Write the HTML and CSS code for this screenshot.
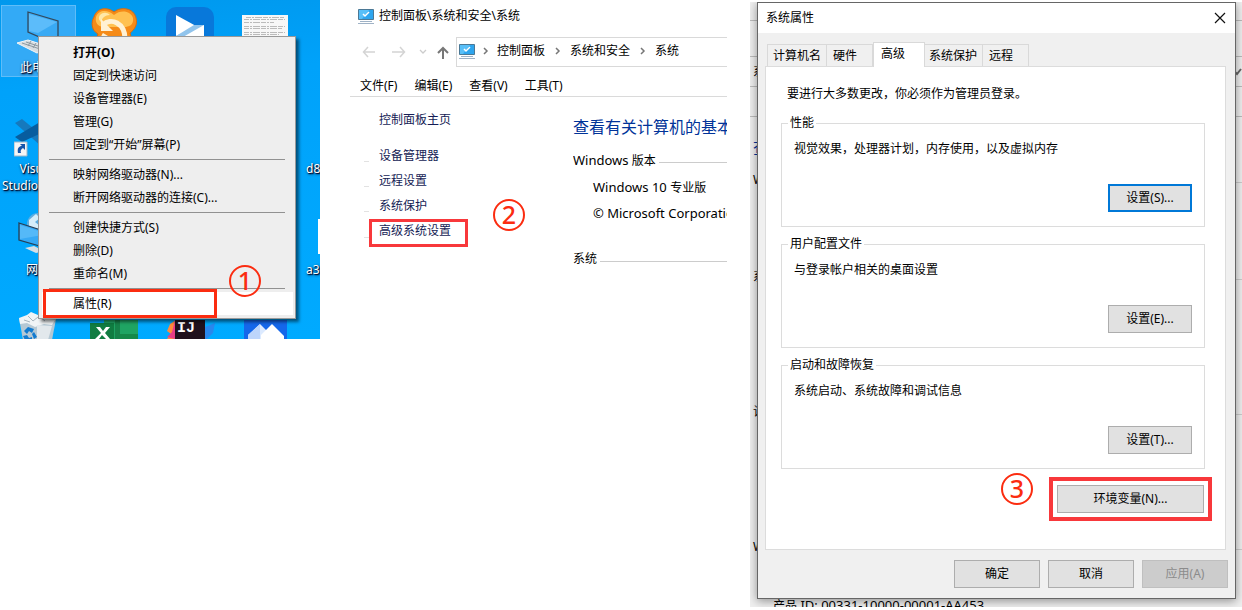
FILE: index.html
```html
<!DOCTYPE html>
<html lang="zh-CN">
<head>
<meta charset="utf-8">
<title>系统属性</title>
<link rel="stylesheet" href="styles.css">
</head>
<body>
<main class="steps">
  <section class="step step-desktop">
    <div class="desktop">
      <div class="selection"></div>
      <svg class="icon icon-pc" width="48" height="48" viewBox="0 0 48 48">
        <path d="M12 2 42 11v24L12 22z" fill="#39aaf4" stroke="#34495c" stroke-width="1.3"/>
        <path d="M13 4 41 12 22 23 13 21z" fill="#5cbcfa"/>
        <path d="M1 33 12 30 34 37 21 43z" fill="#d8dde0" stroke="#f6f6f6"/>
        <path d="M6 33 24 39M10 32 28 38M15 31 12 36M20 33 17 38" stroke="#8e9aa2" fill="none"/>
      </svg>
      <span class="label label-pc">此电脑</span>
      <svg class="icon icon-vscode" width="36" height="42" viewBox="0 0 36 42">
        <path d="M1 7 8 3 36 26v12z" fill="#1679bd"/>
        <path d="M1 21 36 0v13L8 26z" fill="#075d9f"/>
        <path d="M0 26h13v14H0z" fill="#f5f5f5" stroke="#99b5ca"/>
        <path d="M4 37c-1-5 1-7 4-7l-2-2h5v6l-2-2c-2 1-3 3-2 5z" fill="#1655aa"/>
      </svg>
      <span class="label label-vscode">Visual<br>Studio Code</span>
      <svg class="icon icon-network" width="36" height="42" viewBox="0 0 36 42">
        <circle cx="20" cy="12" r="11" fill="#5daee1"/>
        <path d="M11 8l7-6 4 4-5 4 5 4-3 6-8-5zM24 2l7 5-2 7-5-3z" fill="#d5edf9"/>
        <path d="M1 11 32 21v16L1 28z" fill="#36a9f5" stroke="#273f55" stroke-width="1.3"/>
        <path d="M2 13 30 22 2 27z" fill="#55b9f8"/>
        <path d="M7 36 16 34 26 39 18 41z" fill="#d7dfe4"/>
      </svg>
      <span class="label label-network">网络</span>
      <svg class="icon icon-orange" width="48" height="46" viewBox="0 0 48 46">
        <path d="M4 9C7-1 18-1 24 4 31-2 44 0 46 10c2 7-2 12-6 15 4 12 0 20-16 20S4 39 8 26C1 22 1 14 4 9z" fill="#f58b18" stroke="#db6c0c"/>
        <path d="M6 9C9 1 18 2 24 7c7-6 17-4 19 3 1 7-4 9-9 9H13C7 18 5 14 6 9z" fill="#ffc151"/>
        <path d="M10 7c3-3 7-3 10 0-5 0-8 3-9 7-2-2-3-4-1-7z" fill="#ffe8a8"/>
        <path d="M13 17c8-8 22-2 22 14" fill="none" stroke="#fff1d4" stroke-width="5"/>
        <path d="M11 11v12h12z" fill="#fff1d4"/>
        <path d="M11 30c0-2 1-4 2-5l5 3-1 3z" fill="#fff1d4"/>
      </svg>
      <svg class="icon icon-video" width="48" height="46" viewBox="0 0 48 46">
        <rect width="48" height="46" rx="10" fill="#0878da"/>
        <path d="M10 8 30 19 10 29z" fill="#fff"/>
        <path d="M10 29 28 18h10v20H10z" fill="#fff"/>
        <path d="M10 29 28 18h10L17 30H10z" fill="#91c4ec"/>
      </svg>
      <svg class="icon icon-paper" width="46" height="30" viewBox="0 0 46 30">
        <path d="M0 0h46v30H0z" fill="#f7f7f7"/>
        <path d="M4 2.500h38M2 4.500h41M2 7.500h30M2 11.500h41M2 13.500h38M2 17.500h41M2 19.500h35" stroke="#bbb" stroke-dasharray="5 1 2 1 7 1"/>
      </svg>
      <svg class="icon icon-bin" width="40" height="28" viewBox="0 0 40 28">
        <path d="M1 6 5 28h29l4-21z" fill="#b5c8d4"/>
        <path d="M1 6 9 3l4-3 7 3 7-1 4 5 6 1-3 5-8-1-9 3-8-4-7 1z" fill="#f0f4f6"/>
        <path d="M10 4l5 5 5-4M22 5l5 4M6 8l6 2" stroke="#a7b5be" fill="none"/>
        <path d="M19 13v15h11l4-14z" fill="#e2e8ec"/>
        <path d="M6 19l4-4 6 2-2 4-3-2-2 3zM5 24l4-1 2 3 3-1v3H7zM16 20l3 5-3 2-2-5z" fill="#117bd0"/>
      </svg>
      <svg class="icon icon-excel" width="48" height="19" viewBox="0 0 48 19">
        <path d="M14 0h34v19H14z" fill="#1fa463"/>
        <path d="M25 0h5v19h-5z" fill="#168249"/><path d="M30 14h18v5H30z" fill="#158949"/>
        <path d="M0 3h24v16H0z" fill="#107c41"/>
        <path d="M6 7h4l3 4 3-4h4l-5 6 5 6h-4l-4-4-3 4H5l6-6z" fill="#fff"/>
      </svg>
      <div class="icon icon-idea">
        <svg width="48" height="19" viewBox="0 0 48 19">
          <path d="M3 4 9 0v19H0l4-5-4-3z" fill="#ff8b3c"/><path d="M8 0v19l-8-2 5-5z" fill="#e83d87"/>
          <path d="M38 7 48 3l-2 10-6 6h-5z" fill="#2987ed"/>
          <path d="M8 0h30v19H8z" fill="#20111d"/>
        </svg>
        <span class="idea-text">IJ</span>
      </div>
      <svg class="icon icon-peaks" width="44" height="19" viewBox="0 0 44 19">
        <path d="M0 0h43v19H0z" fill="#1567ea"/>
        <path d="M4 19v-4L16 4l9 9v6z" fill="#dceaff"/><path d="M16 4v15H4v-4z" fill="#bdd5fb"/>
        <path d="M17 15 28 4l12 12v3H17z" fill="#fff"/>
      </svg>
      <span class="label label-d">d8</span>
      <span class="file-edge"></span>
      <span class="label label-a">a3</span>

      <div class="context-menu" role="menu">
        <button class="menu-item menu-default" role="menuitem">打开(O)</button>
        <button class="menu-item" role="menuitem">固定到快速访问</button>
        <button class="menu-item" role="menuitem">设备管理器(E)</button>
        <button class="menu-item" role="menuitem">管理(G)</button>
        <button class="menu-item" role="menuitem">固定到“开始”屏幕(P)</button>
        <hr class="menu-rule">
        <button class="menu-item" role="menuitem">映射网络驱动器(N)...</button>
        <button class="menu-item" role="menuitem">断开网络驱动器的连接(C)...</button>
        <hr class="menu-rule">
        <button class="menu-item" role="menuitem">创建快捷方式(S)</button>
        <button class="menu-item" role="menuitem">删除(D)</button>
        <button class="menu-item" role="menuitem">重命名(M)</button>
        <hr class="menu-rule">
        <button class="menu-item menu-current" role="menuitem">属性(R)</button>
        <span class="menu-mark"></span>
      </div>
      <span class="number number-one">1</span>
    </div>
  </section>

  <section class="step step-panel">
    <header class="panel-title">
      <svg width="16" height="16" viewBox="0 0 16 16"><path d="M.5 1.500h15v10H.5z" fill="#2ea5ee" stroke="#4b7895"/><path d="M1 2h10L4 11H1z" fill="#58bff8"/><path d="m5 6 2 2 4-4" fill="none" stroke="#fff" stroke-width="1.500"/><path d="M2 13.500h12M0 15.500h16" stroke="#9fb2c6"/></svg>
      <span>控制面板\系统和安全\系统</span>
    </header>
    <div class="nav-row">
      <div class="nav-buttons">
        <button class="nav-button" aria-label="后退"><svg width="14" height="12" viewBox="0 0 14 12"><path d="M13 6H2M6 1 1.500 6 6 11" fill="none" stroke="#d4d4d4" stroke-width="1.500"/></svg></button>
        <button class="nav-button nav-forward" aria-label="前进"><svg width="14" height="12" viewBox="0 0 14 12"><path d="M0 6h12M8 1l4.500 5L8 11" fill="none" stroke="#d4d4d4" stroke-width="1.500"/></svg></button>
        <button class="nav-button nav-recent" aria-label="最近位置"><svg width="8" height="6" viewBox="0 0 8 6"><path d="m1 1 3 3 3-3" fill="none" stroke="#ccc" stroke-width="1.300"/></svg></button>
        <button class="nav-button" aria-label="向上"><svg width="12" height="13" viewBox="0 0 12 13"><path d="M6 13V2M1 7l5-5 5 5" fill="none" stroke="#777" stroke-width="2"/></svg></button>
      </div>
      <div class="address">
        <svg width="16" height="16" viewBox="0 0 16 16"><path d="M.5 1.500h15v10H.5z" fill="#2ea5ee" stroke="#4b7895"/><path d="M1 2h10L4 11H1z" fill="#58bff8"/><path d="m5 6 2 2 4-4" fill="none" stroke="#fff" stroke-width="1.500"/><path d="M2 13.500h12M0 15.500h16" stroke="#9fb2c6"/></svg>
        <svg class="crumb-arrow crumb-first" width="6" height="8" viewBox="0 0 6 8"><path d="m1 1 3 3-3 3" fill="none" stroke="#777" stroke-width="1.500"/></svg>
        <span>控制面板</span>
        <svg class="crumb-arrow" width="6" height="8" viewBox="0 0 6 8"><path d="m1 1 3 3-3 3" fill="none" stroke="#777" stroke-width="1.500"/></svg>
        <span>系统和安全</span>
        <svg class="crumb-arrow" width="6" height="8" viewBox="0 0 6 8"><path d="m1 1 3 3-3 3" fill="none" stroke="#777" stroke-width="1.500"/></svg>
        <span>系统</span>
      </div>
    </div>
    <div class="menu-bar">
      <button class="bar-item">文件(F)</button><button class="bar-item">编辑(E)</button><button class="bar-item">查看(V)</button><button class="bar-item">工具(T)</button>
    </div>
    <div class="panel-body">
      <nav class="side">
        <a class="side-link" href="#home">控制面板主页</a>
        <ul class="side-list">
          <li><a class="side-link" href="#devices">设备管理器</a></li>
          <li><a class="side-link" href="#remote">远程设置</a></li>
          <li><a class="side-link" href="#protect">系统保护</a></li>
          <li><a class="side-link side-marked" href="#advanced">高级系统设置</a></li>
        </ul>
      </nav>
      <span class="number number-two">2</span>
      <div class="info">
        <h1 class="info-heading">查看有关计算机的基本信息</h1>
        <h2 class="ruled"><span><span class="latin">Windows</span> 版本</span></h2>
        <p class="info-line"><span class="latin">Windows 10 </span>专业版</p>
        <p class="info-line"><span class="latin">© Microsoft Corporation</span></p>
        <h2 class="ruled ruled-system">系统</h2>
      </div>
    </div>
  </section>

  <section class="step step-dialog">
    <div class="backdrop" aria-hidden="true">
      <div class="back-title"></div>
      <div class="back-row back-nav"></div>
      <div class="back-row back-address"><span>系</span><svg width="8" height="8" viewBox="0 0 8 8"><path d="m0 3 3 3 4-5" fill="none" stroke="#666" stroke-width="2"/></svg></div>
      <div class="back-row"></div>
      <div class="back-heading">查</div>
      <div class="ruled">Windows</div>
      <div class="ruled back-gap-a">系统</div>
      <div class="ruled back-gap-b">计算机</div>
      <div class="ruled back-gap-b">Windows</div>
      <div class="back-product">产品<span class="latin"> ID: 00331-10000-00001-AA453</span></div>
    </div>
    <div class="dialog" role="dialog" aria-labelledby="dialog-title">
      <header class="dialog-title">
        <span id="dialog-title">系统属性</span>
        <button class="close" aria-label="关闭"><svg width="12" height="12" viewBox="0 0 12 12"><path d="m1 1 10 10M11 1 1 11" stroke="#111" stroke-width="1.200"/></svg></button>
      </header>
      <div class="tabs" role="tablist">
        <button class="tab" role="tab">计算机名</button>
        <button class="tab tab-hardware" role="tab">硬件</button>
        <button class="tab tab-active" role="tab" aria-selected="true">高级</button>
        <button class="tab tab-protect" role="tab">系统保护</button>
        <button class="tab tab-remote" role="tab">远程</button>
      </div>
      <div class="tab-panel" role="tabpanel">
        <p class="notice">要进行大多数更改，你必须作为管理员登录。</p>
        <fieldset class="group">
          <legend>性能</legend>
          <p>视觉效果，处理器计划，内存使用，以及虚拟内存</p>
          <button class="button button-focus">设置(S)...</button>
        </fieldset>
        <fieldset class="group">
          <legend>用户配置文件</legend>
          <p>与登录帐户相关的桌面设置</p>
          <button class="button">设置(E)...</button>
        </fieldset>
        <fieldset class="group">
          <legend>启动和故障恢复</legend>
          <p>系统启动、系统故障和调试信息</p>
          <button class="button">设置(T)...</button>
        </fieldset>
        <div class="environment">
          <span class="number number-three">3</span>
          <button class="button button-environment">环境变量(N)...</button>
        </div>
      </div>
      <footer class="dialog-footer">
        <button class="button">确定</button>
        <button class="button">取消</button>
        <button class="button" disabled>应用(A)</button>
      </footer>
    </div>
  </section>
</main>
</body>
</html>
```

FILE: styles.css
```css
* { box-sizing: border-box; }
body {
  margin: 0;
  background: #fff;
  color: #000;
  font: 12px/16px "Noto Sans", "Noto Sans CJK SC", sans-serif;
}
p, h1, h2, ul { margin: 0; padding: 0; font: inherit; }
ul { list-style: none; }
button { margin: 0; padding: 0; border: 0; background: none; color: inherit; font: inherit; white-space: nowrap; }
svg { display: block; flex: none; }
.latin { font-size: 13px; }
.steps {
  display: grid;
  grid-template-columns: minmax(0, 320fr) minmax(0, 407fr) minmax(0, 515fr);
  align-items: start;
}

/* numbered markers */
.number {
  flex: none;
  width: 32px;
  height: 32px;
  border: 2px solid #fb2c10;
  border-radius: 50%;
  color: #fb2c10;
  font-size: 25px;
  font-weight: 500;
  line-height: 27px;
  text-align: center;
}

/* desktop canvas */
.desktop {
  position: relative;
  overflow: hidden;
  min-height: 339px;
  background: linear-gradient(175deg, #0098ed 0, #00a2fa 25%, #00aaff 100%);
}
.icon, .label, .selection, .file-edge { position: absolute; }
.selection { left: 1px; top: 5px; width: 75px; height: 72px; border: 1px solid #5fbdf8; background: #33aaf6; }
.icon-pc { left: 16px; top: 10px; }
.icon-vscode { left: 14px; top: 116px; }
.icon-network { left: 18px; top: 212px; }
.icon-orange { left: 90px; top: 8px; }
.icon-video { left: 166px; top: 7px; }
.icon-paper { left: 242px; top: 15px; }
.icon-bin { left: 18px; top: 312px; }
.icon-excel { left: 90px; top: 320px; }
.icon-idea { left: 167px; top: 320px; }
.icon-peaks { left: 244px; top: 320px; }
.idea-text { position: absolute; left: 10px; top: 0; color: #fff; font: bold 15px/18px "Liberation Mono", monospace; }
.label { color: #fff; line-height: 17px; text-align: center; text-shadow: 1px 1px 1px #002, 1px 1px 3px #002; white-space: nowrap; }
.label-pc { left: 20px; top: 59px; }
.label-vscode { left: 2px; top: 160px; }
.label-network { left: 26px; top: 261px; }
.label-d { left: 306px; top: 160px; }
.label-a { left: 306px; top: 261px; }
.file-edge { right: 0; top: 219px; width: 2px; height: 35px; background: #fff; }

.context-menu {
  position: absolute;
  left: 38px;
  top: 36px;
  width: 258px;
  padding: 4px 2px 3px 3px;
  border: 1px solid #999;
  background: #eee;
  box-shadow: 3px 3px 3px rgba(0, 0, 0, .5);
}
.menu-item { display: block; width: 100%; padding-left: 31px; line-height: 23px; text-align: left; }
.menu-default { font-weight: bold; }
.menu-current { background: #fff; }
.menu-rule { margin: 3px 8px 3px 7px; border: 0; border-top: 1px solid #919191; }
.menu-mark { position: absolute; left: 4px; bottom: 0; width: 174px; height: 29px; border: 3px solid #fb2c10; }
.number-one { position: absolute; left: 229px; top: 265px; }

/* control panel window */
.step-panel { padding-left: 30px; overflow: hidden; }
.panel-title { display: flex; align-items: center; gap: 5px; height: 32px; padding-left: 8px; }
.nav-row { display: flex; margin-top: 5px; }
.nav-buttons { display: flex; align-items: center; width: 106px; padding-left: 12px; }
.nav-button { display: block; }
.nav-forward { margin-left: 16px; }
.nav-recent { margin: 0 10px 0 13px; }
.address {
  display: flex;
  align-items: center;
  flex: 1;
  min-width: 0;
  height: 30px;
  padding: 0 0 2px 2px;
  border: 1px solid #d9d9d9;
  border-right: 0;
  white-space: nowrap;
}
.crumb-arrow { margin: 0 9px 0 10px; }
.crumb-first { margin: 0 8px; }
.menu-bar { display: flex; gap: 17px; padding: 10px 0 1px 10px; border-bottom: 1px solid #dadada; line-height: 18px; }
.panel-body { display: flex; align-items: flex-start; }
.side { width: 118px; padding-top: 10px; }
.side-link { display: block; margin-left: 19px; padding-left: 10px; color: #151c55; line-height: 25px; text-decoration: none; white-space: nowrap; }
.side-list { margin-top: 11px; }
.side-list li { position: relative; }
.side-list li::before { content: ""; position: absolute; left: 14px; top: 18px; width: 5px; height: 1px; background: #e2e2e2; }
.side-marked { margin-top: 1px; padding: 0 0 4px 7px; border: 3px solid #f8383b; line-height: 18px; }
.number-two { margin: 102px 48px 0 25px; }
.info { flex: 1; min-width: 0; overflow: hidden; padding-top: 18px; white-space: nowrap; }
.info-heading { margin-bottom: 13px; color: #039; font-size: 16px; line-height: 24px; }
.ruled { display: flex; align-items: center; gap: 3px; white-space: nowrap; }
.ruled::after { content: ""; flex: 1; height: 1px; margin-top: 4px; background: #ccc; }
.info-line { padding: 10px 0 0 20px; }
.info-line + .info-line { padding-top: 9px; }
.ruled-system { margin-top: 29px; }

/* dialog over the system window */
.step-dialog {
  display: grid;
  grid-template-columns: minmax(0, 1fr);
  margin: 2px 0 0 23px;
  overflow: hidden;
}
.backdrop, .dialog { grid-area: 1 / 1; }
.backdrop { height: 605px; overflow: hidden; padding-left: 3px; background: #efefef; }
.back-title, .back-row { margin-left: -3px; border-bottom: 1px solid #bbb; }
.back-title { height: 19px; }
.back-row { height: 30px; }
.back-nav { height: 36px; }
.back-address { display: flex; align-items: center; justify-content: space-between; padding-left: 3px; }
.back-heading { margin: 19px 0 12px; color: #039; font-size: 16px; line-height: 24px; }
.back-gap-a { margin-top: 81px; }
.back-gap-b { margin-top: 119px; }
.back-product { margin-top: 42px; padding-left: 20px; }
.dialog {
  align-self: start;
  margin: 0 6px 0 7px;
  border: 1px solid #666;
  background: #f0f0f0;
  box-shadow: 0 2px 9px rgba(0, 0, 0, .4);
}
.dialog-title { display: flex; align-items: center; justify-content: space-between; height: 30px; padding: 0 9px 0 8px; background: #fff; }
.tabs { display: flex; align-items: flex-end; padding: 9px 7px 0 9px; }
.tab { height: 22px; padding: 0 5px; border: 1px solid #d9d9d9; border-bottom: 0; text-align: left; }
.tab + .tab { border-left: 0; }
.tab-hardware { width: 46px; padding-left: 6px; }
.tab.tab-active { position: relative; width: 52px; height: 25px; margin-bottom: -1px; padding: 0 7px 2px; border-left: 1px solid #d9d9d9; background: #fff; }
.tab-protect { width: 58px; padding: 0 4px; }
.tab-remote { width: 46px; padding-left: 6px; }
.tab-panel { margin: 0 9px 0 7px; padding: 19px 20px 36px 15px; border: 1px solid #dcdcdc; background: #fff; }
.notice { padding-left: 6px; margin-bottom: 13px; }
.group { display: flex; flex-direction: column; margin: 0 0 9px; padding: 10px 12px 14px; border: 1px solid #dcdcdc; }
.group legend { margin-left: -6px; padding: 0 2px; }
.group .button { align-self: flex-end; margin-top: 27px; }
.button { width: 84px; height: 28px; border: 1px solid #adadad; background: #e1e1e1; text-align: center; }
.button-focus { border: 2px solid #0078d7; }
.environment { display: flex; align-items: center; justify-content: flex-end; gap: 24px; margin-top: 16px; padding-right: 1px; height: 28px; }
.button-environment { width: 147px; outline: 4px solid #f8383b; outline-offset: 4px; }
.number-three { margin-top: -20px; }
.dialog-footer { display: flex; justify-content: flex-end; gap: 8px; padding: 10px 7px; }
.dialog-footer .button { width: 86px; }
.button:disabled { border-color: #bfbfbf; background: #ccc; color: #8b8b8b; }
```
